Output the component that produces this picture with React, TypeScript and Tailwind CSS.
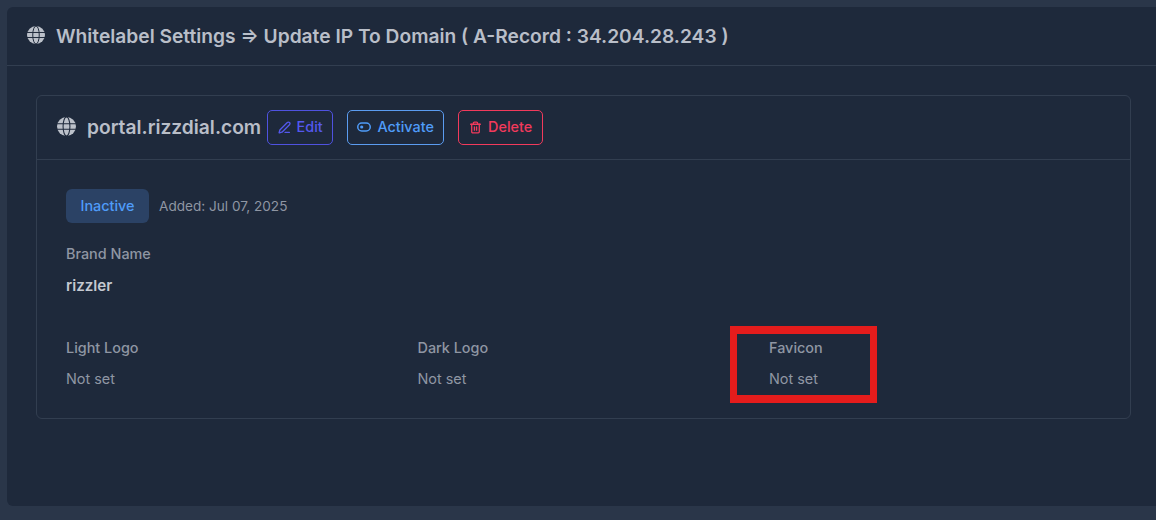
import React from 'react';
import { PenLine, Trash2 } from 'lucide-react';

function GlobeIcon({ className }: { className: string }) {
  return (
    <svg viewBox="0 0 20 20" className={className}>
      <circle cx="10" cy="10" r="10" fill="#bcc1ca" />
      <g fill="none" stroke="#1e293b" strokeWidth="1.1">
        <path d="M0 7.2h20M0 12.8h20" />
        <ellipse cx="10" cy="10" rx="3.6" ry="10" />
      </g>
    </svg>
  );
}

function ToggleIcon() {
  return (
    <svg viewBox="0 0 14 10" className="h-[10px] w-[14px]" fill="none" stroke="currentColor" strokeWidth="1.5">
      <rect x="0.75" y="1" width="12.5" height="8" rx="4" />
      <circle cx="4.7" cy="5" r="1.6" fill="currentColor" stroke="none" />
    </svg>
  );
}

function AssetField({ label, width }: { label: string; width: string }) {
  return (
    <div className={width}>
      <div className="text-[14.4px] leading-5 font-medium text-[#8f96a3]">{label}</div>
      <div className="mt-[11px] text-[14.4px] leading-5 text-[#8f96a3]">Not set</div>
    </div>
  );
}

export default function App() {
  return (
    <div className="relative h-[520px] w-[1156px] overflow-hidden bg-[#2a3649] pl-[7px] pt-[7px] font-['Inter',sans-serif]">
      {/* Main card, runs off the right edge */}
      <div className="h-[499px] w-[1170px] rounded-l-md bg-[#1e293b]">
        <div className="flex h-[59px] items-center gap-[11px] border-b border-[#323e50] pb-[1px] pl-5">
          <GlobeIcon className="h-[18px] w-[18px] -translate-y-[1px]" />
          <h1 className="text-[19.2px] leading-7 font-semibold whitespace-nowrap text-[#b9bec8]">
            Whitelabel Settings ⇒ Update IP To Domain ( A-Record : 34.204.28.243 )
          </h1>
        </div>

        <div className="pl-[29px] pt-[29px]">
          <div className="h-[324px] w-[1095px] rounded-md border border-[#323e50]">
            <div className="flex h-[64px] items-center border-b border-[#323e50] pl-5">
              <GlobeIcon className="h-[19px] w-[19px] -translate-y-[1px]" />
              <span className="ml-[11px] -translate-y-[1px] text-[19.2px] leading-7 font-semibold text-[#b9bec8]">portal.rizzdial.com</span>
              <button className="ml-[6px] flex h-[35px] w-[66px] items-center justify-center gap-[6px] rounded-[5px] border border-[#4f52e0] pb-[1px] text-[14.4px] font-medium text-[#5458ee]">
                <PenLine size={13} strokeWidth={2.4} />
                Edit
              </button>
              <button className="ml-[14px] flex h-[35px] w-[97px] items-center justify-center gap-[6px] rounded-[5px] border border-[#5b9cf0] pb-[1px] text-[14.4px] font-medium text-[#4f9cf9]">
                <ToggleIcon />
                Activate
              </button>
              <button className="ml-[14px] flex h-[35px] w-[85px] items-center justify-center gap-[6px] rounded-[5px] border border-[#f23a5c] pb-[1px] text-[14.4px] font-medium text-[#f23a5c]">
                <Trash2 size={13} strokeWidth={2.4} />
                Delete
              </button>
            </div>

            <div className="pl-[29px] pt-[29px]">
              <div className="flex items-center gap-[10px]">
                <span className="flex h-[34px] w-[83px] items-center justify-center rounded-md bg-[#2b4265] text-[14.4px] font-medium text-[#4f9cf9]">
                  Inactive
                </span>
                <span className="text-[13.6px] leading-5 text-[#8f96a3]">Added: Jul 07, 2025</span>
              </div>
              <div className="mt-[21px] text-[14.4px] leading-5 font-medium text-[#8f96a3]">Brand Name</div>
              <div className="mt-[12px] text-[15.2px] leading-5 font-semibold text-[#c5c9d1]">rizzler</div>
              <div className="mt-[42px] flex">
                <AssetField label="Light Logo" width="w-[351.5px]" />
                <AssetField label="Dark Logo" width="w-[351.5px]" />
                <AssetField label="Favicon" width="w-[200px]" />
              </div>
            </div>
          </div>
        </div>
      </div>

      {/* Red annotation box drawn on the screenshot */}
      <div className="absolute left-[730px] top-[326px] h-[77px] w-[147px] border-x-[7px] border-y-[8px] border-[#e51c1c]" />
    </div>
  );
}
